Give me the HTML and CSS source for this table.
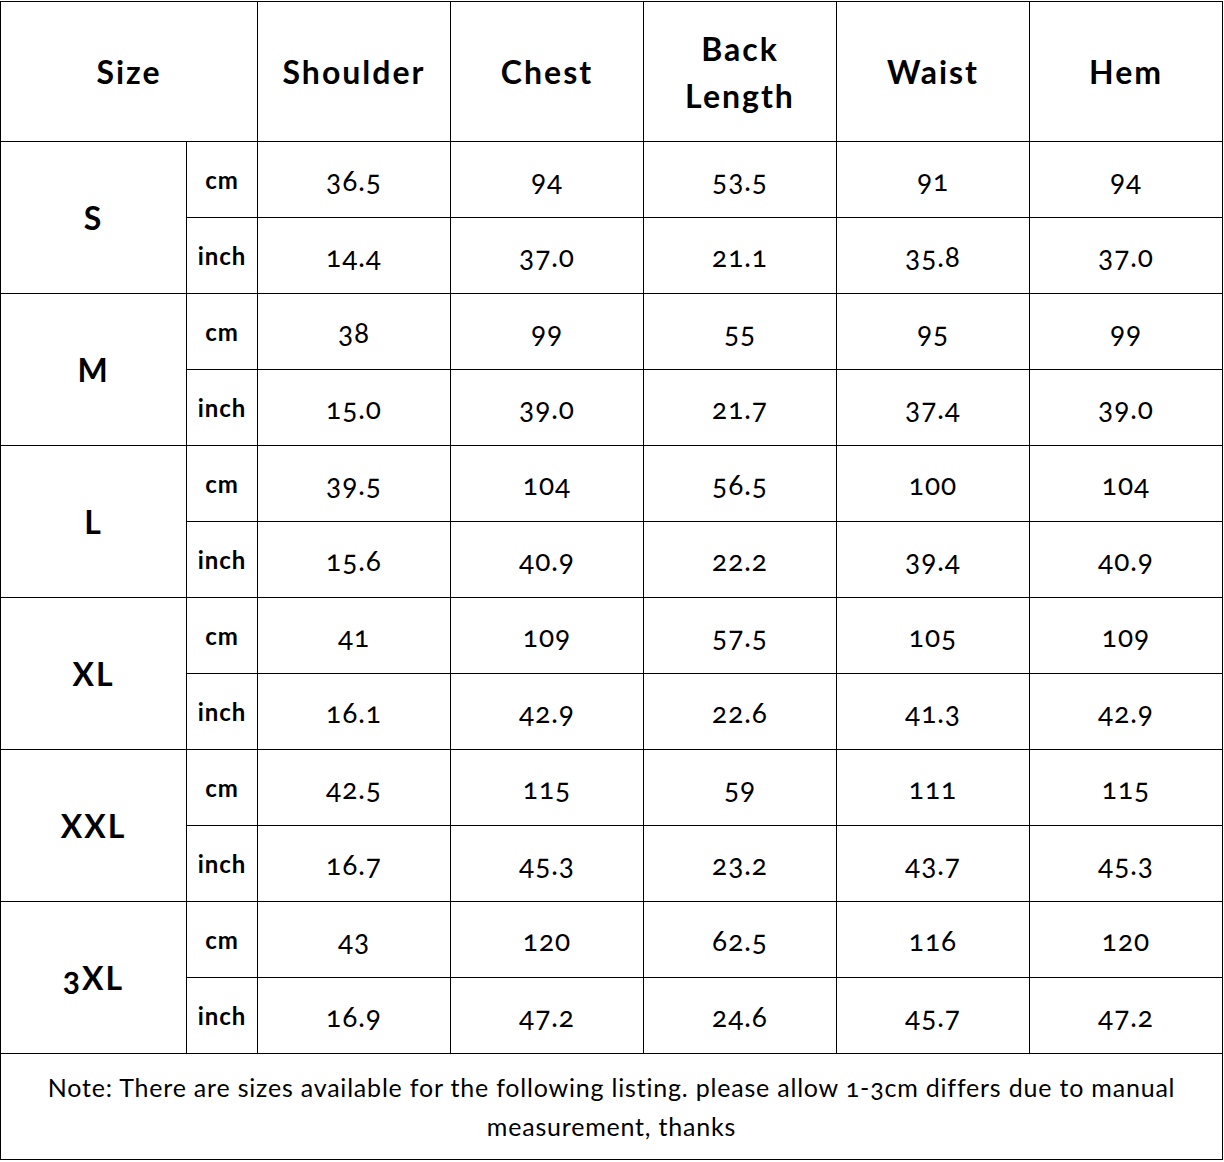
FILE: index.html
```html
<!DOCTYPE html>
<html>
<head>
<meta charset="utf-8">
<link rel="stylesheet" href="styles.css">
</head>
<body>
<table class="chart">
  <colgroup>
    <col class="c-size"><col class="c-unit"><col class="c-val"><col class="c-val"><col class="c-val"><col class="c-val"><col class="c-val">
  </colgroup>
  <tr class="head">
    <th colspan="2">Size</th>
    <th>Shoulder</th>
    <th>Chest</th>
    <th>Back<br>Length</th>
    <th>Waist</th>
    <th>Hem</th>
  </tr>
  <tr><td class="sz" rowspan="2">S</td><td class="u">cm</td><td>36.5</td><td>94</td><td>53.5</td><td>91</td><td>94</td></tr>
  <tr><td class="u">inch</td><td>14.4</td><td>37.0</td><td>21.1</td><td>35.8</td><td>37.0</td></tr>
  <tr><td class="sz" rowspan="2">M</td><td class="u">cm</td><td>38</td><td>99</td><td>55</td><td>95</td><td>99</td></tr>
  <tr><td class="u">inch</td><td>15.0</td><td>39.0</td><td>21.7</td><td>37.4</td><td>39.0</td></tr>
  <tr><td class="sz" rowspan="2">L</td><td class="u">cm</td><td>39.5</td><td>104</td><td>56.5</td><td>100</td><td>104</td></tr>
  <tr><td class="u">inch</td><td>15.6</td><td>40.9</td><td>22.2</td><td>39.4</td><td>40.9</td></tr>
  <tr><td class="sz" rowspan="2">XL</td><td class="u">cm</td><td>41</td><td>109</td><td>57.5</td><td>105</td><td>109</td></tr>
  <tr><td class="u">inch</td><td>16.1</td><td>42.9</td><td>22.6</td><td>41.3</td><td>42.9</td></tr>
  <tr><td class="sz" rowspan="2">XXL</td><td class="u">cm</td><td>42.5</td><td>115</td><td>59</td><td>111</td><td>115</td></tr>
  <tr><td class="u">inch</td><td>16.7</td><td>45.3</td><td>23.2</td><td>43.7</td><td>45.3</td></tr>
  <tr><td class="sz" rowspan="2">3XL</td><td class="u">cm</td><td>43</td><td>120</td><td>62.5</td><td>116</td><td>120</td></tr>
  <tr><td class="u">inch</td><td>16.9</td><td>47.2</td><td>24.6</td><td>45.7</td><td>47.2</td></tr>
  <tr class="note"><td colspan="7">Note: There are sizes available for the following listing. please allow 1-3cm differs due to manual<br>measurement, thanks</td></tr>
</table>
</body>
</html>
```
FILE: styles.css
```css
html, body {
  margin: 0;
  padding: 0;
  background: #fff;
}
body {
  padding-top: 1px;
}
.chart {
  border-collapse: collapse;
  table-layout: fixed;
  width: 1222px;
  font-family: Lato, "Open Sans", sans-serif;
  font-variant-numeric: oldstyle-nums;
  color: #000;
}
.c-size { width: 186px; }
.c-unit { width: 71px; }
.c-val { width: 193px; }
.chart th, .chart td {
  border: 1px solid #000;
  text-align: center;
  vertical-align: middle;
  padding: 0;
}
.head th {
  height: 139px;
  font-size: 32px;
  font-weight: 700;
  line-height: 47px;
  letter-spacing: 2px;
}
.chart td {
  height: 75px;
  font-size: 28px;
  font-weight: 400;
  letter-spacing: 1px;
}
.chart td.u {
  font-size: 24px;
  font-weight: 700;
  letter-spacing: 1px;
}
.chart td.sz {
  font-size: 32px;
  font-weight: 700;
  letter-spacing: 2px;
}
.note td {
  height: 105px;
  font-size: 25px;
  line-height: 39px;
  letter-spacing: 0.8px;
}
```
